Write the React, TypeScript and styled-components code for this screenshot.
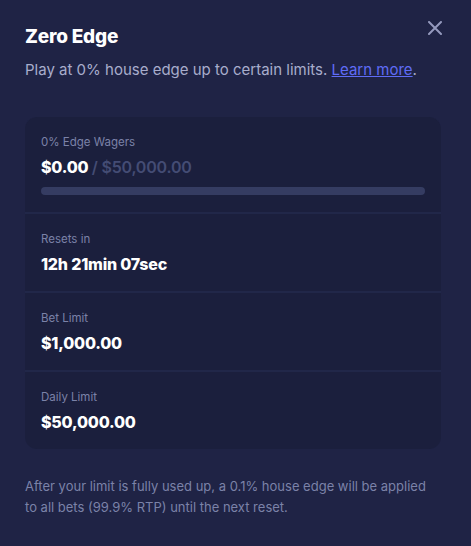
import styled, { createGlobalStyle } from 'styled-components';

const GlobalStyle = createGlobalStyle`
  html, body {
    margin: 0;
    padding: 0;
    background: #1f2345;
  }
  body {
    font-family: Inter, "Noto Sans", sans-serif;
  }
`;

const Modal = styled.div`
  position: relative;
  box-sizing: border-box;
  width: 471px;
  height: 546px;
  padding: 25px 30px 25px 25px;
  background: #1f2345;
  display: flex;
  flex-direction: column;
`;

const Title = styled.h2`
  margin: 0;
  font-size: 19px;
  line-height: 24px;
  font-weight: 800;
  color: #ffffff;
  letter-spacing: -0.2px;
`;

const Subtitle = styled.p`
  margin: 10px 0 0;
  font-size: 15px;
  line-height: 22px;
  color: #a8adcc;
  white-space: nowrap;
`;

const Link = styled.a`
  color: #5f6cf6;
  text-decoration: underline;
`;

const CloseButton = styled.button`
  position: absolute;
  top: 19px;
  right: 27px;
  width: 18px;
  height: 18px;
  padding: 0;
  border: none;
  background: none;
  cursor: pointer;
  display: flex;
  align-items: center;
  justify-content: center;
`;

const Card = styled.div`
  margin-top: 36px;
  display: flex;
  flex-direction: column;
  gap: 2px;
  background: #212749;
  border-radius: 12px;
  overflow: hidden;
`;

const Section = styled.div`
  display: flex;
  flex-direction: column;
  padding: 18px 16px 17px;
  background: #1b1f3d;
`;

const Label = styled.div`
  font-size: 11.5px;
  line-height: 15px;
  color: #7b82a8;
`;

const Value = styled.div`
  margin-top: 7px;
  font-size: 16px;
  line-height: 20px;
  font-weight: 800;
  color: #ffffff;
  letter-spacing: -0.2px;
`;

const Muted = styled.span`
  font-weight: 600;
  color: #444c74;
`;

const Track = styled.div`
  margin-top: 10px;
  height: 8px;
  border-radius: 4px;
  background: #353c62;
  overflow: hidden;
`;

const Fill = styled.div`
  height: 100%;
  background: #5f6cf6;
`;

const Footer = styled.p`
  margin: 27px 0 0;
  max-width: 408px;
  font-size: 13px;
  line-height: 21px;
  color: #7b82a8;
`;

const rows = [
  { label: 'Resets in', value: '12h 21min 07sec' },
  { label: 'Bet Limit', value: '$1,000.00' },
  { label: 'Daily Limit', value: '$50,000.00' },
];

export default function App() {
  const used = 0;
  const limit = 50000;
  return (
    <>
      <GlobalStyle />
      <Modal>
        <CloseButton aria-label="Close">
          <svg width="14" height="14" viewBox="0 0 14 14">
            <path d="M1 1L13 13M13 1L1 13" stroke="#9499bd" strokeWidth="2" strokeLinecap="round" />
          </svg>
        </CloseButton>
        <Title>Zero Edge</Title>
        <Subtitle>
          Play at 0% house edge up to certain limits. <Link href="#">Learn more</Link>.
        </Subtitle>
        <Card>
          <Section>
            <Label>0% Edge Wagers</Label>
            <Value>
              $0.00 <Muted>/ $50,000.00</Muted>
            </Value>
            <Track>
              <Fill style={{ width: `${(used / limit) * 100}%` }} />
            </Track>
          </Section>
          {rows.map((r) => (
            <Section key={r.label}>
              <Label>{r.label}</Label>
              <Value>{r.value}</Value>
            </Section>
          ))}
        </Card>
        <Footer>
          After your limit is fully used up, a 0.1% house edge will be applied to all bets (99.9% RTP) until the
          next reset.
        </Footer>
      </Modal>
    </>
  );
}
